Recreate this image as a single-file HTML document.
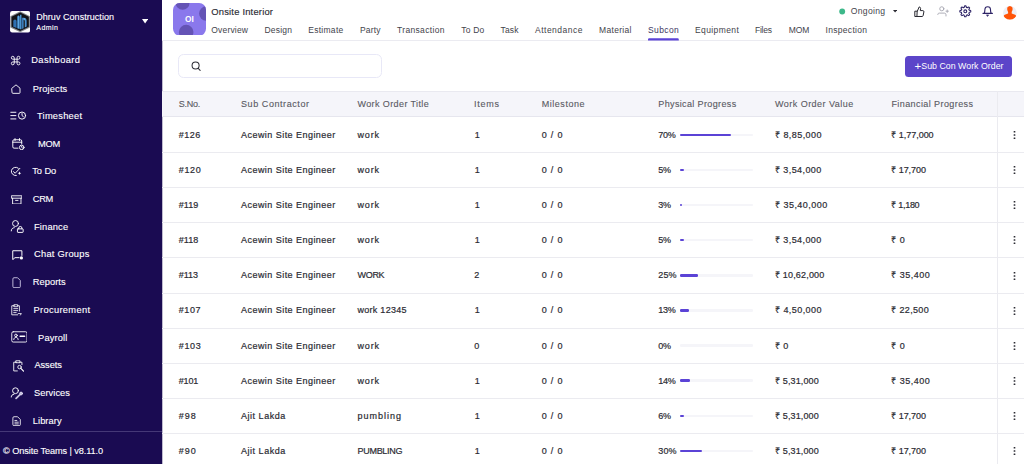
<!DOCTYPE html>
<html lang="en"><head><meta charset="utf-8"><title>Onsite Interior – Subcon</title>
<style>
*{box-sizing:border-box;margin:0;padding:0}
html,body{width:1024px;height:464px;overflow:hidden;background:#fff}
body{font-family:"Liberation Sans", sans-serif;color:#2b2b33;position:relative;-webkit-font-smoothing:antialiased}
span,a,h1,p,li,th,td,button,small{white-space:pre}
.abs,.ic{position:absolute}
aside{position:absolute;left:0;top:0;width:162px;box-shadow:1px 0 0 rgba(26,11,82,.28);height:464px;background:#1a0b52;color:#fff}
aside span,aside a,aside p,aside small,aside strong{position:absolute;line-height:1;color:#fff;text-decoration:none;font-weight:400}
aside ul{list-style:none}
aside hr{position:absolute;left:0;top:431px;width:162.3px;height:1px;border:0;background:#453877}
main{position:absolute;left:0;top:0;width:1024px;height:464px}
main header{position:absolute;left:162px;top:0;width:862px;height:40.5px;border-bottom:1px solid #ebebf1;background:#fff}
main span,main a,main h1,main th,main td,main button{position:absolute;line-height:1;font-weight:400;text-decoration:none}
.tabs a{color:#43434b}
.tabs a.on{color:#3b3560}
.search{position:absolute;left:178.25px;top:54.25px;width:203.5px;height:23.3px;border:1px solid #e8e8f7;border-radius:5.5px;background:#fff}
.btn{position:absolute;left:904.8px;top:55.5px;width:107.2px;height:21.2px;border:0;border-radius:3.5px;background:#5c45c9}
.thead{position:absolute;left:162px;top:90.7px;width:862px;height:26.8px;background:#f5f5fa;border-top:1px solid #e9e9f0;border-bottom:1px solid #e6e6ee}
.vline{position:absolute;left:997px;top:91px;width:1px;height:373px;background:#ebebf0}
.row{position:absolute;left:162px;width:862px;height:1px;background:#ebebf0}
.track{position:absolute;height:2.5px;background:#f5f5f9;border-radius:1.2px}
.fill{position:absolute;height:2.5px;background:#5b43d6;border-radius:1.2px}
section.tbl span{-webkit-text-stroke:0.2px currentColor}
main h1{-webkit-text-stroke:0.15px currentColor}
section.tbl span.th{-webkit-text-stroke:0.12px currentColor}
aside a,aside strong,aside small{-webkit-text-stroke:0.12px #fff}
</style></head>
<body>
<aside>
<svg class="ic" style="left:10px;top:11px" width="20.2" height="21.6" viewBox="0 0 40 43"><defs><linearGradient id="lg" x1="0" y1="0" x2="1" y2="0"><stop offset="0" stop-color="#2a68a8"/><stop offset="0.55" stop-color="#63aee6"/><stop offset="1" stop-color="#2f72b4"/></linearGradient></defs><rect x="0" y="0" width="40" height="43" rx="4.500" fill="#fdfdfd"/><path d="M20.200 0.600 39.600 10.300v22.400L20.200 42.400 0.600 32.700V10.300z" fill="#85888d"/><path d="M20.200 3.200 37.300 11.600v19.800L20.200 39.800 3 31.400V11.600z" fill="#121317"/><path d="M6.500 31.500V20.500c0-2 1.500-3.500 3.300-3.500s3.200 1.500 3.200 3.500V34z" fill="#2e6fb1"/><path d="M14 34.500V12.500c0-2 1.200-3.500 2.800-3.500s2.700 1.500 2.700 3.500v23.500z" fill="url(#lg)"/><path d="M19.900 36.500V7.500h2.800v29z" fill="#4f9bd8"/><path d="M23.200 36V13.500h4c3.500 0 6 2.500 6 6V31l-3.800 2V20c0-1.700-1-2.800-2.500-2.800V34.500z" fill="url(#lg)"/></svg>
<strong style="left:36.25px;top:13.00px;font-size:9px;letter-spacing:0.041px;">Dhruv Construction</strong>
<small style="left:36.25px;top:24.00px;font-size:7px;letter-spacing:0.477px;">Admin</small>
<svg class="ic" style="left:141.500px;top:19.400px" width="6.200" height="4.600" viewBox="0 0 62 46"><path d="M0 0h62L31 46z" fill="#fff"/></svg>
<nav><ul>
<li><svg class="ic" style="left:9.9px;top:55.05px" width="11.5" height="11.5" viewBox="0 0 11.5 11.5" fill="none" stroke="#fff" stroke-width="0.9" stroke-linecap="round" stroke-linejoin="round"><path d="M4.25 2.75A1.45 1.45 0 1 0 2.80 4.2H8.50A1.45 1.45 0 1 0 7.05 2.75V8.40A1.45 1.45 0 1 0 8.50 6.95H2.80A1.45 1.45 0 1 0 4.25 8.40Z"/></svg><a style="left:31.25px;top:56.00px;font-size:9.3px;letter-spacing:0.408px;">Dashboard</a></li>
<li><svg class="ic" style="left:11.4px;top:83.6px" width="10" height="10.2" viewBox="0 0 20 20" fill="none" stroke="#fff" stroke-width="1.8" stroke-linecap="round" stroke-linejoin="round"><path d="M2 8.2 10 1.5l8 6.7V17a1.5 1.5 0 0 1-1.5 1.5h-13A1.5 1.5 0 0 1 2 17z"/></svg><a style="left:32.75px;top:85.00px;font-size:9.3px;letter-spacing:0.129px;">Projects</a></li>
<li><svg class="ic" style="left:10.2px;top:111.4px" width="16.4" height="9.2" viewBox="0 0 32 18" fill="none" stroke="#fff" stroke-width="1.9" stroke-linecap="round" stroke-linejoin="round"><path d="M1.5 2.5h10M1.5 9h10M1.5 15.5h10"/><circle cx="23.5" cy="9" r="7"/><path d="M23.5 5v4l2.6 2"/></svg><a style="left:37.00px;top:112.00px;font-size:9.3px;letter-spacing:0.242px;">Timesheet</a></li>
<li><svg class="ic" style="left:12.4px;top:137.6px" width="13" height="12.4" viewBox="0 0 26 25" fill="none" stroke="#fff" stroke-width="1.9" stroke-linecap="round" stroke-linejoin="round"><path d="M12 20.5H4A2.5 2.5 0 0 1 1.500 18V6A2.500 2.500 0 0 1 4 3.500h13A2.500 2.500 0 0 1 19.500 6v6M1.500 8.500h18M6 1.200v4M15 1.200v4"/><circle cx="19.500" cy="19" r="4.600"/><path d="M19.500 16.800V19l1.500 1.200"/></svg><a style="left:38.10px;top:140.00px;font-size:9.3px;letter-spacing:-0.3px;">MOM</a></li>
<li><svg class="ic" style="left:10px;top:166px" width="12" height="11" viewBox="0 0 12 11" fill="none" stroke="#fff" stroke-width="0.95" stroke-linecap="round" stroke-linejoin="round"><path d="M8.260 2.180A4.200 4.200 0 1 0 6.290 9.540"/><path d="M3.500 5.700l1.700 1.500L9.900 2.300"/><path d="M9.500 5.500Q9.750 7.050 11.300 7.300 9.750 7.550 9.500 9.100 9.250 7.550 7.700 7.300 9.250 7.050 9.500 5.500z" fill="#fff" stroke="none"/></svg><a style="left:32.25px;top:167.00px;font-size:9.3px;letter-spacing:-0.074px;">To Do</a></li>
<li><svg class="ic" style="left:10.6px;top:194.5px" width="11.6" height="9.8" viewBox="0 0 24 20" fill="none" stroke="#fff" stroke-width="1.9" stroke-linecap="round" stroke-linejoin="round"><path d="M1.500 1.500h21v5h-21zM3.300 6.500v12h17.400v-12M9.500 11h5"/></svg><a style="left:32.75px;top:195.00px;font-size:9.3px;letter-spacing:-0.3px;">CRM</a></li>
<li><svg class="ic" style="left:10px;top:219px" width="15" height="15" viewBox="0 0 15 15" fill="none" stroke="#fff" stroke-width="0.95" stroke-linecap="round" stroke-linejoin="round"><circle cx="5.500" cy="4.500" r="2.950"/><path d="M1.250 11.900C1.250 10 2.500 8.800 4.300 8.650"/><rect x="7.450" y="9.850" width="5.700" height="3.550" rx=".5"/><path d="M8.700 9.850V9.050a1.600 1.600 0 0 1 3.200 0V9.850"/></svg><a style="left:34.00px;top:223.00px;font-size:9.3px;letter-spacing:0.17px;">Finance</a></li>
<li><svg class="ic" style="left:11.5px;top:249.7px" width="11.4" height="10.4" viewBox="0 0 23 21" fill="none" stroke="#fff" stroke-width="2" stroke-linecap="round" stroke-linejoin="round"><path d="M14.500 15.500H6l-4.500 4V1.500h18.500V11"/><circle cx="19" cy="16" r="3.200" fill="#fff" stroke="none"/></svg><a style="left:34.00px;top:250.00px;font-size:9.3px;letter-spacing:0.268px;">Chat Groups</a></li>
<li><svg class="ic" style="left:11.5px;top:276.6px" width="9.2" height="11.4" viewBox="0 0 18 23" fill="none" stroke="#fff" stroke-width="1.8" stroke-linecap="round" stroke-linejoin="round"><path d="M1.500 3.500a2 2 0 0 1 2-2H11l5.500 5.500v12.500a2 2 0 0 1-2 2h-11a2 2 0 0 1-2-2z" stroke="#cfc9e6"/></svg><a style="left:32.75px;top:278.00px;font-size:9.3px;letter-spacing:0.048px;">Reports</a></li>
<li><svg class="ic" style="left:10.6px;top:303.9px" width="11.4" height="11.8" viewBox="0 0 23 24" fill="none" stroke="#fff" stroke-width="1.7" stroke-linecap="round" stroke-linejoin="round"><path d="M6.500 3.500h-5v18.500h12M13.500 3.500h3.500v11"/><path d="M6.500 1.500h7v4h-7z"/><path d="M5.500 9.500h8M5.500 13.500h8M5.500 17.500h5"/><path d="M14.500 19.500h6.500l-2 3"/></svg><a style="left:33.50px;top:306.00px;font-size:9.3px;letter-spacing:0.327px;">Procurement</a></li>
<li><svg class="ic" style="left:10.6px;top:331.3px" width="16.8" height="11.8" viewBox="0 0 34 24" fill="none" stroke="#fff" stroke-width="1.8" stroke-linecap="round" stroke-linejoin="round"><rect x="1.500" y="1.500" width="31" height="21" rx="3"/><circle cx="10" cy="9" r="2.700"/><path d="M5.500 17.500c0-3 2-4.500 4.500-4.500s4.500 1.500 4.500 4.500"/><path d="M18.500 10.500h9" stroke-width="3"/></svg><a style="left:38.10px;top:334.00px;font-size:9.3px;letter-spacing:0.121px;">Payroll</a></li>
<li><svg class="ic" style="left:12.6px;top:359.8px" width="11.6" height="12.2" viewBox="0 0 24 25" fill="none" stroke="#fff" stroke-width="1.8" stroke-linecap="round" stroke-linejoin="round"><path d="M7 4.500H1.500v18H9M14 4.500h4.500v5"/><path d="M6.500 1.500h8v4h-8z"/><circle cx="13.500" cy="14.500" r="3.600"/><path d="M16.300 17.300l5.500 5.500"  stroke-width="2.600"/></svg><a style="left:34.40px;top:361.00px;font-size:9.3px;letter-spacing:-0.081px;">Assets</a></li>
<li><svg class="ic" style="left:10px;top:385px" width="15" height="15" viewBox="0 0 15 15" fill="none" stroke="#fff" stroke-width="0.95" stroke-linecap="round" stroke-linejoin="round"><circle cx="5.500" cy="5.700" r="2.900"/><path d="M1.250 12C1.250 10.400 2.300 9.400 3.900 9.250"/><path d="M6.100 13.300l3.900-3.700" stroke-width="1.800" stroke="#c9c4e0"/><circle cx="11.100" cy="8.500" r="1.400" fill="#bfb9da" stroke="#ddd9ee"/></svg><a style="left:34.00px;top:389.00px;font-size:9.3px;letter-spacing:0.049px;">Services</a></li>
<li><svg class="ic" style="left:11.5px;top:416.0px" width="9.2" height="10.4" viewBox="0 0 18 21" fill="none" stroke="#fff" stroke-width="1.7" stroke-linecap="round" stroke-linejoin="round"><path d="M1.500 3.500a2 2 0 0 1 2-2H11l5.500 5.500v10.500a2 2 0 0 1-2 2h-11a2 2 0 0 1-2-2z"/><path d="M5.500 9h4M5.500 12.500h7M5.500 16h7"/></svg><a style="left:32.75px;top:417.00px;font-size:9.3px;letter-spacing:0.071px;">Library</a></li>
</ul></nav>
<hr>
<small style="left:3.10px;top:447.00px;font-size:9.2px;letter-spacing:-0.099px;">© Onsite Teams | v8.11.0</small>
</aside>
<main>
<header>
<svg class="ic" style="left:11px;top:2.500px" width="33" height="32.700" viewBox="0 0 326 326" preserveAspectRatio="none"><defs><clipPath id="av"><rect width="326" height="326" rx="68"/></clipPath></defs><g clip-path="url(#av)"><rect width="326" height="326" fill="#8a78ec"/><circle cx="95" cy="0" r="68" fill="#6453b5"/><circle cx="330" cy="105" r="72" fill="#6453b5"/><circle cx="130" cy="290" r="72" fill="#6453b5"/></g><text x="163" y="186" text-anchor="middle" font-family="Liberation Sans, sans-serif" font-weight="700" font-size="82" fill="#fff">OI</text></svg>
<h1 style="left:49.25px;top:7.00px;font-size:9.4px;letter-spacing:0.204px;color:#2a2a32;">Onsite Interior</h1>
<nav class="tabs">
<a style="left:49.25px;top:26.00px;font-size:8.5px;letter-spacing:0.188px;">Overview</a>
<a style="left:102.50px;top:26.00px;font-size:8.5px;letter-spacing:0.206px;">Design</a>
<a style="left:146.25px;top:26.00px;font-size:8.5px;letter-spacing:0.275px;">Estimate</a>
<a style="left:198.00px;top:26.00px;font-size:8.5px;letter-spacing:0.164px;">Party</a>
<a style="left:235.00px;top:26.00px;font-size:8.5px;letter-spacing:0.341px;">Transaction</a>
<a style="left:299.25px;top:26.00px;font-size:8.5px;letter-spacing:0.195px;">To Do</a>
<a style="left:338.50px;top:26.00px;font-size:8.5px;letter-spacing:0.172px;">Task</a>
<a style="left:373.00px;top:26.00px;font-size:8.5px;letter-spacing:0.498px;">Attendance</a>
<a style="left:437.00px;top:26.00px;font-size:8.5px;letter-spacing:0.324px;">Material</a>
<a class="on" style="left:486.00px;top:26.00px;font-size:8.5px;letter-spacing:0.381px;">Subcon</a>
<a style="left:533.00px;top:26.00px;font-size:8.5px;letter-spacing:0.389px;">Equipment</a>
<a style="left:593.00px;top:26.00px;font-size:8.5px;letter-spacing:-0.238px;">Files</a>
<a style="left:626.75px;top:26.00px;font-size:8.5px;letter-spacing:-0.141px;">MOM</a>
<a style="left:663.50px;top:26.00px;font-size:8.5px;letter-spacing:0.306px;">Inspection</a>
<svg class="ic" style="left:486px;top:37px" width="31" height="4" viewBox="0 0 31 4"><path d="M0 3.500V2.500a1.200 1.200 0 0 1 1.200-1.200h28.400a1.200 1.200 0 0 1 1.200 1.200v1z" fill="#5b43d6"/></svg>
</nav>
<svg class="ic" style="left:677px;top:8px" width="7" height="7" viewBox="0 0 70 70"><circle cx="32" cy="34.500" r="29.500" fill="#3db88a"/></svg><span style="left:688.75px;top:7.00px;font-size:8.6px;letter-spacing:0.317px;color:#44444c;">Ongoing</span>
<svg class="ic" style="left:731.2px;top:10.2px" width="4.2" height="2.4" viewBox="0 0 42 24"><path d="M0 0h42L21 24z" fill="#2b2b33"/></svg>
<svg class="ic" style="left:751.700px;top:5.700px" width="11" height="11.200" viewBox="0 0 11 11.200" fill="none" stroke="#26262e" stroke-width="1" stroke-linejoin="round" stroke-linecap="round"><path d="M3.300 5.200 5.200.9c.9.100 1.400.8 1.400 1.600l-.3 2.100h2.600c.7 0 1.100.6 1 1.200l-.8 3.900c-.1.500-.5.800-1 .800H3.300zM3.300 5.200H.8v5.300h2.500"/></svg>
<svg class="ic" style="left:774.600px;top:6.200px" width="12.600" height="10.600" viewBox="0 0 12.600 10.600" fill="none" stroke="#a9a9b3" stroke-width="0.950" stroke-linecap="round" stroke-linejoin="round"><circle cx="4.800" cy="2.800" r="2.050"/><path d="M.8 8.500c0-1 .7-1.400 1.700-1.400h4.800c1.200 0 1.700.7 1.700 1.900v1"/><path d="M10.200 4v2.400M9 5.200h2.400"/></svg>
<svg class="ic" style="left:797.450px;top:4.950px" width="12.600" height="12.600" viewBox="0 0 12.600 12.600" fill="none" stroke="#2d2366" stroke-width="1.100" stroke-linejoin="round"><circle cx="6.300" cy="6.300" r="1.450"/><path d="M11.77 6.30 11.77 6.51 11.75 6.73 11.73 6.94 11.37 7.10 10.96 7.23 10.55 7.32 10.18 7.39 10.13 7.55 10.08 7.69 10.02 7.84 9.96 7.99 9.89 8.13 9.82 8.27 10.03 8.58 10.25 8.94 10.45 9.31 10.60 9.69 10.46 9.85 10.32 10.01 10.17 10.17 10.01 10.32 9.85 10.46 9.69 10.60 9.31 10.45 8.94 10.25 8.58 10.03 8.27 9.82 8.13 9.89 7.99 9.96 7.84 10.02 7.69 10.08 7.55 10.13 7.39 10.18 7.32 10.55 7.23 10.96 7.10 11.37 6.94 11.73 6.73 11.75 6.51 11.77 6.30 11.77 6.09 11.77 5.87 11.75 5.66 11.73 5.50 11.37 5.37 10.96 5.28 10.55 5.21 10.18 5.05 10.13 4.91 10.08 4.76 10.02 4.61 9.96 4.47 9.89 4.33 9.82 4.02 10.03 3.66 10.25 3.29 10.45 2.91 10.60 2.75 10.46 2.59 10.32 2.43 10.17 2.28 10.01 2.14 9.85 2.00 9.69 2.15 9.31 2.35 8.94 2.57 8.58 2.78 8.27 2.71 8.13 2.64 7.99 2.58 7.84 2.52 7.69 2.47 7.55 2.42 7.39 2.05 7.32 1.64 7.23 1.23 7.10 0.87 6.94 0.85 6.73 0.83 6.51 0.83 6.30 0.83 6.09 0.85 5.87 0.87 5.66 1.23 5.50 1.64 5.37 2.05 5.28 2.42 5.21 2.47 5.05 2.52 4.91 2.58 4.76 2.64 4.61 2.71 4.47 2.78 4.33 2.57 4.02 2.35 3.66 2.15 3.29 2.00 2.91 2.14 2.75 2.28 2.59 2.43 2.43 2.59 2.28 2.75 2.14 2.91 2.00 3.29 2.15 3.66 2.35 4.02 2.57 4.33 2.78 4.47 2.71 4.61 2.64 4.76 2.58 4.91 2.52 5.05 2.47 5.21 2.42 5.28 2.05 5.37 1.64 5.50 1.23 5.66 0.87 5.87 0.85 6.09 0.83 6.30 0.83 6.51 0.83 6.73 0.85 6.94 0.87 7.10 1.23 7.23 1.64 7.32 2.05 7.39 2.42 7.55 2.47 7.69 2.52 7.84 2.58 7.99 2.64 8.13 2.71 8.27 2.78 8.58 2.57 8.94 2.35 9.31 2.15 9.69 2.00 9.85 2.14 10.01 2.28 10.17 2.43 10.32 2.59 10.46 2.75 10.60 2.91 10.45 3.29 10.25 3.66 10.03 4.02 9.82 4.33 9.89 4.47 9.96 4.61 10.02 4.76 10.08 4.91 10.13 5.05 10.18 5.21 10.55 5.28 10.96 5.37 11.37 5.50 11.73 5.66 11.75 5.87 11.77 6.09z"/></svg>
<svg class="ic" style="left:819.800px;top:5.100px" width="11.400" height="12.400" viewBox="0 0 11.400 12.400" fill="none" stroke="#2d2366" stroke-width="1.100" stroke-linecap="round" stroke-linejoin="round"><path d="M2.300 8.300c.5-1.500.6-2.600.6-3.800a2.800 2.800 0 0 1 5.600 0c0 1.200.100 2.300.6 3.800M1 8.400h9.400"/><path d="M4.800 9.900h1.800l-.9 1.300z" fill="#2d2366" stroke-width="0.600"/></svg>
<svg class="ic" style="left:841.200px;top:5.900px" width="13.800" height="13.800" viewBox="0 0 138 138"><defs><clipPath id="ua"><circle cx="69" cy="69" r="69"/></clipPath></defs><circle cx="69" cy="69" r="69" fill="#eeeef4"/><g clip-path="url(#ua)" fill="#ff5408"><path d="M69 0c16 0 27 10 27 27 0 14-4 24-9 30v18l34 13c10 5 14 14 14 50H3c0-36 4-45 14-50l34-13V57c-5-6-9-16-9-30C42 10 53 0 69 0z"/></g></svg>
</header>
<section>
<label class="search"><svg class="ic" style="left:11.600px;top:5.600px" width="10.200" height="10.600" viewBox="0 0 20 21" fill="none" stroke="#2b2b33" stroke-width="2" stroke-linecap="round"><circle cx="9" cy="9" r="7"/><path d="M14.200 14.600 18 18.600"/></svg></label>
<button class="btn"><span style="left:9.80px;top:5.50px;font-size:11.5px;letter-spacing:0px;color:#fff;">+</span><span style="left:16.50px;top:6.50px;font-size:8.8px;letter-spacing:0.013px;color:#fff;">Sub Con Work Order</span></button>
</section>
<section class="tbl">
<div class="thead"></div>
<span class="th" style="left:178.75px;top:100.00px;font-size:9px;letter-spacing:-0.254px;color:#5a5a63;">S.No.</span>
<span class="th" style="left:241.00px;top:100.00px;font-size:9px;letter-spacing:0.575px;color:#5a5a63;">Sub Contractor</span>
<span class="th" style="left:357.50px;top:100.00px;font-size:9px;letter-spacing:0.393px;color:#5a5a63;">Work Order Title</span>
<span class="th" style="left:474.00px;top:100.00px;font-size:9px;letter-spacing:0.746px;color:#5a5a63;">Items</span>
<span class="th" style="left:541.75px;top:100.00px;font-size:9px;letter-spacing:0.527px;color:#5a5a63;">Milestone</span>
<span class="th" style="left:658.25px;top:100.00px;font-size:9px;letter-spacing:0.373px;color:#5a5a63;">Physical Progress</span>
<span class="th" style="left:775.00px;top:100.00px;font-size:9px;letter-spacing:0.47px;color:#5a5a63;">Work Order Value</span>
<span class="th" style="left:891.40px;top:100.00px;font-size:9px;letter-spacing:0.416px;color:#5a5a63;">Financial Progress</span>
<div class="vline"></div>
<div class="row" style="top:152.00px"></div>
<span class="c0" style="left:178.75px;top:131.00px;font-size:9px;letter-spacing:0.49px;color:#2b2b33;">#126</span><span class="c1" style="left:241.00px;top:131.00px;font-size:9px;letter-spacing:0.457px;color:#2b2b33;">Acewin Site Engineer</span><span class="c2" style="left:357.50px;top:131.00px;font-size:9px;letter-spacing:0.828px;color:#2b2b33;">work</span><span class="c3" style="left:474.70px;top:131.00px;font-size:9px;letter-spacing:0px;color:#2b2b33;">1</span><span class="c4" style="left:541.75px;top:131.00px;font-size:9px;letter-spacing:0.809px;color:#2b2b33;">0 / 0</span><span class="c5" style="left:658.25px;top:131.00px;font-size:9px;letter-spacing:-0.258px;color:#2b2b33;">70%</span><i class="track" style="left:680px;top:133.50px;width:73px"></i><i class="fill" style="left:680px;top:133.50px;width:51.10px"></i><span class="c6" style="left:775.00px;top:131.00px;font-size:9px;letter-spacing:0.439px;color:#2b2b33;">₹ 8,85,000</span><span class="c7" style="left:891.40px;top:131.00px;font-size:9px;letter-spacing:-0.033px;color:#2b2b33;">₹ 1,77,000</span><svg class="ic" style="left:1012.600px;top:130.05px" width="3" height="10" viewBox="0 0 3 10" fill="#2b2b33"><rect x=".65" y=".9" width="1.700" height="1.700" rx=".35"/><rect x=".65" y="4.150" width="1.700" height="1.700" rx=".35"/><rect x=".65" y="7.400" width="1.700" height="1.700" rx=".35"/></svg>
<div class="row" style="top:187.13px"></div>
<span class="c0" style="left:178.75px;top:166.00px;font-size:9px;letter-spacing:0.656px;color:#2b2b33;">#120</span><span class="c1" style="left:241.00px;top:166.00px;font-size:9px;letter-spacing:0.457px;color:#2b2b33;">Acewin Site Engineer</span><span class="c2" style="left:357.50px;top:166.00px;font-size:9px;letter-spacing:0.828px;color:#2b2b33;">work</span><span class="c3" style="left:474.70px;top:166.00px;font-size:9px;letter-spacing:0px;color:#2b2b33;">1</span><span class="c4" style="left:541.75px;top:166.00px;font-size:9px;letter-spacing:0.809px;color:#2b2b33;">0 / 0</span><span class="c5" style="left:658.25px;top:166.00px;font-size:9px;letter-spacing:-0.3px;color:#2b2b33;">5%</span><i class="track" style="left:680px;top:168.63px;width:73px"></i><i class="fill" style="left:680px;top:168.63px;width:3.65px"></i><span class="c6" style="left:775.00px;top:166.00px;font-size:9px;letter-spacing:0.411px;color:#2b2b33;">₹ 3,54,000</span><span class="c7" style="left:891.40px;top:166.00px;font-size:9px;letter-spacing:-0.076px;color:#2b2b33;">₹ 17,700</span><svg class="ic" style="left:1012.600px;top:165.18px" width="3" height="10" viewBox="0 0 3 10" fill="#2b2b33"><rect x=".65" y=".9" width="1.700" height="1.700" rx=".35"/><rect x=".65" y="4.150" width="1.700" height="1.700" rx=".35"/><rect x=".65" y="7.400" width="1.700" height="1.700" rx=".35"/></svg>
<div class="row" style="top:222.26px"></div>
<span class="c0" style="left:178.75px;top:201.00px;font-size:9px;letter-spacing:0.047px;color:#2b2b33;">#119</span><span class="c1" style="left:241.00px;top:201.00px;font-size:9px;letter-spacing:0.457px;color:#2b2b33;">Acewin Site Engineer</span><span class="c2" style="left:357.50px;top:201.00px;font-size:9px;letter-spacing:0.828px;color:#2b2b33;">work</span><span class="c3" style="left:474.70px;top:201.00px;font-size:9px;letter-spacing:0px;color:#2b2b33;">1</span><span class="c4" style="left:541.75px;top:201.00px;font-size:9px;letter-spacing:0.809px;color:#2b2b33;">0 / 0</span><span class="c5" style="left:658.25px;top:201.00px;font-size:9px;letter-spacing:-0.3px;color:#2b2b33;">3%</span><i class="track" style="left:680px;top:203.76px;width:73px"></i><i class="fill" style="left:680px;top:203.76px;width:2.19px"></i><span class="c6" style="left:775.00px;top:201.00px;font-size:9px;letter-spacing:0.47px;color:#2b2b33;">₹ 35,40,000</span><span class="c7" style="left:891.40px;top:201.00px;font-size:9px;letter-spacing:-0.3px;color:#2b2b33;">₹ 1,180</span><svg class="ic" style="left:1012.600px;top:200.31px" width="3" height="10" viewBox="0 0 3 10" fill="#2b2b33"><rect x=".65" y=".9" width="1.700" height="1.700" rx=".35"/><rect x=".65" y="4.150" width="1.700" height="1.700" rx=".35"/><rect x=".65" y="7.400" width="1.700" height="1.700" rx=".35"/></svg>
<div class="row" style="top:257.39px"></div>
<span class="c0" style="left:178.75px;top:236.00px;font-size:9px;letter-spacing:0.047px;color:#2b2b33;">#118</span><span class="c1" style="left:241.00px;top:236.00px;font-size:9px;letter-spacing:0.457px;color:#2b2b33;">Acewin Site Engineer</span><span class="c2" style="left:357.50px;top:236.00px;font-size:9px;letter-spacing:0.828px;color:#2b2b33;">work</span><span class="c3" style="left:474.70px;top:236.00px;font-size:9px;letter-spacing:0px;color:#2b2b33;">1</span><span class="c4" style="left:541.75px;top:236.00px;font-size:9px;letter-spacing:0.809px;color:#2b2b33;">0 / 0</span><span class="c5" style="left:658.25px;top:236.00px;font-size:9px;letter-spacing:-0.3px;color:#2b2b33;">5%</span><i class="track" style="left:680px;top:238.89px;width:73px"></i><i class="fill" style="left:680px;top:238.89px;width:3.65px"></i><span class="c6" style="left:775.00px;top:236.00px;font-size:9px;letter-spacing:0.411px;color:#2b2b33;">₹ 3,54,000</span><span class="c7" style="left:891.40px;top:236.00px;font-size:9px;letter-spacing:0.367px;color:#2b2b33;">₹ 0</span><svg class="ic" style="left:1012.600px;top:235.44px" width="3" height="10" viewBox="0 0 3 10" fill="#2b2b33"><rect x=".65" y=".9" width="1.700" height="1.700" rx=".35"/><rect x=".65" y="4.150" width="1.700" height="1.700" rx=".35"/><rect x=".65" y="7.400" width="1.700" height="1.700" rx=".35"/></svg>
<div class="row" style="top:292.52px"></div>
<span class="c0" style="left:178.75px;top:271.00px;font-size:9px;letter-spacing:-0.036px;color:#2b2b33;">#113</span><span class="c1" style="left:241.00px;top:271.00px;font-size:9px;letter-spacing:0.457px;color:#2b2b33;">Acewin Site Engineer</span><span class="c2" style="left:357.50px;top:271.00px;font-size:9px;letter-spacing:-0.3px;color:#2b2b33;">WORK</span><span class="c3" style="left:474.30px;top:271.00px;font-size:9px;letter-spacing:0px;color:#2b2b33;">2</span><span class="c4" style="left:541.75px;top:271.00px;font-size:9px;letter-spacing:0.809px;color:#2b2b33;">0 / 0</span><span class="c5" style="left:658.25px;top:271.00px;font-size:9px;letter-spacing:0.142px;color:#2b2b33;">25%</span><i class="track" style="left:680px;top:274.02px;width:73px"></i><i class="fill" style="left:680px;top:274.02px;width:18.25px"></i><span class="c6" style="left:775.00px;top:271.00px;font-size:9px;letter-spacing:0.17px;color:#2b2b33;">₹ 10,62,000</span><span class="c7" style="left:891.40px;top:271.00px;font-size:9px;letter-spacing:0.46px;color:#2b2b33;">₹ 35,400</span><svg class="ic" style="left:1012.600px;top:270.57px" width="3" height="10" viewBox="0 0 3 10" fill="#2b2b33"><rect x=".65" y=".9" width="1.700" height="1.700" rx=".35"/><rect x=".65" y="4.150" width="1.700" height="1.700" rx=".35"/><rect x=".65" y="7.400" width="1.700" height="1.700" rx=".35"/></svg>
<div class="row" style="top:327.65px"></div>
<span class="c0" style="left:178.75px;top:306.00px;font-size:9px;letter-spacing:0.573px;color:#2b2b33;">#107</span><span class="c1" style="left:241.00px;top:306.00px;font-size:9px;letter-spacing:0.457px;color:#2b2b33;">Acewin Site Engineer</span><span class="c2" style="left:357.50px;top:306.00px;font-size:9px;letter-spacing:0.274px;color:#2b2b33;">work 12345</span><span class="c3" style="left:474.70px;top:306.00px;font-size:9px;letter-spacing:0px;color:#2b2b33;">1</span><span class="c4" style="left:541.75px;top:306.00px;font-size:9px;letter-spacing:0.809px;color:#2b2b33;">0 / 0</span><span class="c5" style="left:658.25px;top:306.00px;font-size:9px;letter-spacing:-0.3px;color:#2b2b33;">13%</span><i class="track" style="left:680px;top:309.15px;width:73px"></i><i class="fill" style="left:680px;top:309.15px;width:9.49px"></i><span class="c6" style="left:775.00px;top:306.00px;font-size:9px;letter-spacing:0.439px;color:#2b2b33;">₹ 4,50,000</span><span class="c7" style="left:891.40px;top:306.00px;font-size:9px;letter-spacing:0.317px;color:#2b2b33;">₹ 22,500</span><svg class="ic" style="left:1012.600px;top:305.70px" width="3" height="10" viewBox="0 0 3 10" fill="#2b2b33"><rect x=".65" y=".9" width="1.700" height="1.700" rx=".35"/><rect x=".65" y="4.150" width="1.700" height="1.700" rx=".35"/><rect x=".65" y="7.400" width="1.700" height="1.700" rx=".35"/></svg>
<div class="row" style="top:362.78px"></div>
<span class="c0" style="left:178.75px;top:342.00px;font-size:9px;letter-spacing:0.656px;color:#2b2b33;">#103</span><span class="c1" style="left:241.00px;top:342.00px;font-size:9px;letter-spacing:0.457px;color:#2b2b33;">Acewin Site Engineer</span><span class="c2" style="left:357.50px;top:342.00px;font-size:9px;letter-spacing:0.828px;color:#2b2b33;">work</span><span class="c3" style="left:474.30px;top:342.00px;font-size:9px;letter-spacing:0px;color:#2b2b33;">0</span><span class="c4" style="left:541.75px;top:342.00px;font-size:9px;letter-spacing:0.809px;color:#2b2b33;">0 / 0</span><span class="c5" style="left:658.25px;top:342.00px;font-size:9px;letter-spacing:-0.3px;color:#2b2b33;">0%</span><i class="track" style="left:680px;top:344.28px;width:73px"></i><span class="c6" style="left:775.00px;top:342.00px;font-size:9px;letter-spacing:0.367px;color:#2b2b33;">₹ 0</span><span class="c7" style="left:891.40px;top:342.00px;font-size:9px;letter-spacing:0.367px;color:#2b2b33;">₹ 0</span><svg class="ic" style="left:1012.600px;top:340.83px" width="3" height="10" viewBox="0 0 3 10" fill="#2b2b33"><rect x=".65" y=".9" width="1.700" height="1.700" rx=".35"/><rect x=".65" y="4.150" width="1.700" height="1.700" rx=".35"/><rect x=".65" y="7.400" width="1.700" height="1.700" rx=".35"/></svg>
<div class="row" style="top:397.91px"></div>
<span class="c0" style="left:178.75px;top:377.00px;font-size:9px;letter-spacing:-0.177px;color:#2b2b33;">#101</span><span class="c1" style="left:241.00px;top:377.00px;font-size:9px;letter-spacing:0.457px;color:#2b2b33;">Acewin Site Engineer</span><span class="c2" style="left:357.50px;top:377.00px;font-size:9px;letter-spacing:0.828px;color:#2b2b33;">work</span><span class="c3" style="left:474.70px;top:377.00px;font-size:9px;letter-spacing:0px;color:#2b2b33;">1</span><span class="c4" style="left:541.75px;top:377.00px;font-size:9px;letter-spacing:0.809px;color:#2b2b33;">0 / 0</span><span class="c5" style="left:658.25px;top:377.00px;font-size:9px;letter-spacing:-0.3px;color:#2b2b33;">14%</span><i class="track" style="left:680px;top:379.41px;width:73px"></i><i class="fill" style="left:680px;top:379.41px;width:10.22px"></i><span class="c6" style="left:775.00px;top:377.00px;font-size:9px;letter-spacing:0.134px;color:#2b2b33;">₹ 5,31,000</span><span class="c7" style="left:891.40px;top:377.00px;font-size:9px;letter-spacing:0.46px;color:#2b2b33;">₹ 35,400</span><svg class="ic" style="left:1012.600px;top:375.96px" width="3" height="10" viewBox="0 0 3 10" fill="#2b2b33"><rect x=".65" y=".9" width="1.700" height="1.700" rx=".35"/><rect x=".65" y="4.150" width="1.700" height="1.700" rx=".35"/><rect x=".65" y="7.400" width="1.700" height="1.700" rx=".35"/></svg>
<div class="row" style="top:433.04px"></div>
<span class="c0" style="left:178.75px;top:412.00px;font-size:9px;letter-spacing:1.0px;color:#2b2b33;">#98</span><span class="c1" style="left:241.00px;top:412.00px;font-size:9px;letter-spacing:0.524px;color:#2b2b33;">Ajit Lakda</span><span class="c2" style="left:357.50px;top:412.00px;font-size:9px;letter-spacing:1.0px;color:#2b2b33;">pumbling</span><span class="c3" style="left:474.70px;top:412.00px;font-size:9px;letter-spacing:0px;color:#2b2b33;">1</span><span class="c4" style="left:541.75px;top:412.00px;font-size:9px;letter-spacing:0.809px;color:#2b2b33;">0 / 0</span><span class="c5" style="left:658.25px;top:412.00px;font-size:9px;letter-spacing:-0.3px;color:#2b2b33;">6%</span><i class="track" style="left:680px;top:414.54px;width:73px"></i><i class="fill" style="left:680px;top:414.54px;width:4.38px"></i><span class="c6" style="left:775.00px;top:412.00px;font-size:9px;letter-spacing:0.134px;color:#2b2b33;">₹ 5,31,000</span><span class="c7" style="left:891.40px;top:412.00px;font-size:9px;letter-spacing:-0.076px;color:#2b2b33;">₹ 17,700</span><svg class="ic" style="left:1012.600px;top:411.09px" width="3" height="10" viewBox="0 0 3 10" fill="#2b2b33"><rect x=".65" y=".9" width="1.700" height="1.700" rx=".35"/><rect x=".65" y="4.150" width="1.700" height="1.700" rx=".35"/><rect x=".65" y="7.400" width="1.700" height="1.700" rx=".35"/></svg>
<div class="row" style="top:468.17px"></div>
<span class="c0" style="left:178.75px;top:447.00px;font-size:9px;letter-spacing:1.0px;color:#2b2b33;">#90</span><span class="c1" style="left:241.00px;top:447.00px;font-size:9px;letter-spacing:0.524px;color:#2b2b33;">Ajit Lakda</span><span class="c2" style="left:357.50px;top:447.00px;font-size:9px;letter-spacing:-0.288px;color:#2b2b33;">PUMBLING</span><span class="c3" style="left:474.70px;top:447.00px;font-size:9px;letter-spacing:0px;color:#2b2b33;">1</span><span class="c4" style="left:541.75px;top:447.00px;font-size:9px;letter-spacing:0.809px;color:#2b2b33;">0 / 0</span><span class="c5" style="left:658.25px;top:447.00px;font-size:9px;letter-spacing:0.142px;color:#2b2b33;">30%</span><i class="track" style="left:680px;top:449.67px;width:73px"></i><i class="fill" style="left:680px;top:449.67px;width:21.90px"></i><span class="c6" style="left:775.00px;top:447.00px;font-size:9px;letter-spacing:0.134px;color:#2b2b33;">₹ 5,31,000</span><span class="c7" style="left:891.40px;top:447.00px;font-size:9px;letter-spacing:-0.076px;color:#2b2b33;">₹ 17,700</span><svg class="ic" style="left:1012.600px;top:446.22px" width="3" height="10" viewBox="0 0 3 10" fill="#2b2b33"><rect x=".65" y=".9" width="1.700" height="1.700" rx=".35"/><rect x=".65" y="4.150" width="1.700" height="1.700" rx=".35"/><rect x=".65" y="7.400" width="1.700" height="1.700" rx=".35"/></svg>
</section>
</main>
</body></html>
